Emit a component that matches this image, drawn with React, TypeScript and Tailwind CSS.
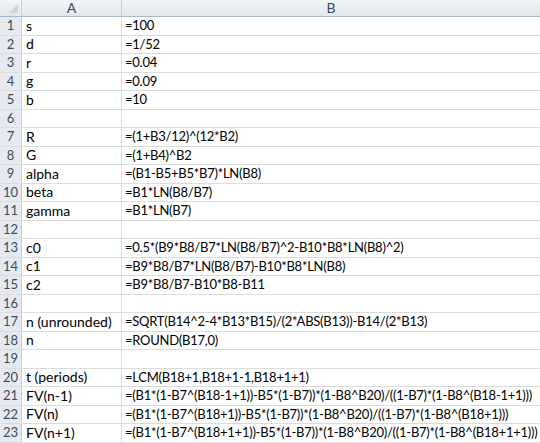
import React from "react";

const rows: [string, string][] = [
  ["s", "=100"],
  ["d", "=1/52"],
  ["r", "=0.04"],
  ["g", "=0.09"],
  ["b", "=10"],
  ["", ""],
  ["R", "=(1+B3/12)^(12*B2)"],
  ["G", "=(1+B4)^B2"],
  ["alpha", "=(B1-B5+B5*B7)*LN(B8)"],
  ["beta", "=B1*LN(B8/B7)"],
  ["gamma", "=B1*LN(B7)"],
  ["", ""],
  ["c0", "=0.5*(B9*B8/B7*LN(B8/B7)^2-B10*B8*LN(B8)^2)"],
  ["c1", "=B9*B8/B7*LN(B8/B7)-B10*B8*LN(B8)"],
  ["c2", "=B9*B8/B7-B10*B8-B11"],
  ["", ""],
  ["n (unrounded)", "=SQRT(B14^2-4*B13*B15)/(2*ABS(B13))-B14/(2*B13)"],
  ["n", "=ROUND(B17,0)"],
  ["", ""],
  ["t (periods)", "=LCM(B18+1,B18+1-1,B18+1+1)"],
  ["FV(n-1)", "=(B1*(1-B7^(B18-1+1))-B5*(1-B7))*(1-B8^B20)/((1-B7)*(1-B8^(B18-1+1)))"],
  ["FV(n)", "=(B1*(1-B7^(B18+1))-B5*(1-B7))*(1-B8^B20)/((1-B7)*(1-B8^(B18+1)))"],
  ["FV(n+1)", "=(B1*(1-B7^(B18+1+1))-B5*(1-B7))*(1-B8^B20)/((1-B7)*(1-B8^(B18+1+1)))"],
];

export default function App() {
  return (
    <div
      className="w-[540px] h-[443px] overflow-hidden bg-white text-[14px] text-black"
      style={{ fontFamily: "Lato, 'Open Sans', sans-serif" }}
    >
      <div className="flex h-[17px] bg-gradient-to-b from-[#f2f4f7] to-[#e3e7ed] border-b border-[#aab8c8] text-[#3b4a5c]">
        <div className="w-[22px] shrink-0 border-r border-[#c5cdd7] relative">
          <div className="absolute right-[3px] bottom-[3px] w-0 h-0 border-l-[9px] border-l-transparent border-b-[9px] border-b-[#cdd3da]" />
        </div>
        <div className="w-[100px] shrink-0 border-r border-[#c5cdd7] flex items-center justify-center leading-none">A</div>
        <div className="flex-1 flex items-center justify-center leading-none">B</div>
      </div>
      {rows.map(([a, b], i) => (
        <div key={i} className="flex h-[18.5px] border-b border-[#dadcdd] leading-none">
          <div className="w-[22px] shrink-0 bg-[#e6eaf0] border-r border-[#c5cdd7] flex items-center justify-center text-[#3b4a5c] text-[13px]">
            {i + 1}
          </div>
          <div className="w-[100px] shrink-0 border-r border-[#dadcdd] flex items-center pl-[4px] whitespace-nowrap overflow-hidden">
            {a}
          </div>
          <div className="flex-1 flex items-center pl-[3px] whitespace-nowrap overflow-hidden text-[13px] tracking-[-0.25px]">
            {b}
          </div>
        </div>
      ))}
    </div>
  );
}
